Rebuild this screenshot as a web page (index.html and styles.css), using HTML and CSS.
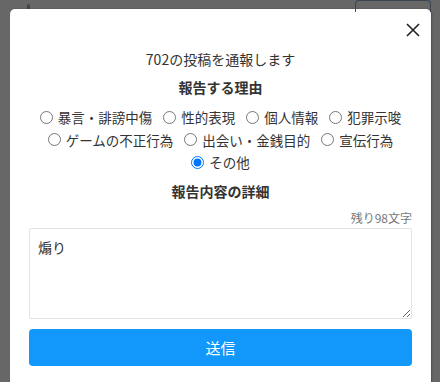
FILE: index.html
```html
<!DOCTYPE html>
<html lang="ja">
<head>
<meta charset="UTF-8">
<meta name="viewport" content="width=device-width, initial-scale=1.0">
<title>通報</title>
<link rel="stylesheet" href="styles.css">
</head>
<body>

<div class="backdrop-header">
    <span class="header-dot"></span>
    <span class="header-button"></span>
</div>

<div class="modal">
    <div class="modal-top">
        <button class="close-button" aria-label="閉じる">
            <svg width="14" height="14" viewBox="0 0 14 14">
                <path d="M1 1 L13 13 M13 1 L1 13" stroke="#222" stroke-width="1.6" fill="none"/>
            </svg>
        </button>
    </div>
    <p class="modal-title">702の投稿を通報します</p>
    <h3 class="section-title">報告する理由</h3>
    <div class="reasons">
        <label class="reason"><input type="radio" name="reason">暴言・誹謗中傷</label>
        <label class="reason"><input type="radio" name="reason">性的表現</label>
        <label class="reason"><input type="radio" name="reason">個人情報</label>
        <label class="reason"><input type="radio" name="reason">犯罪示唆</label>
        <label class="reason"><input type="radio" name="reason">ゲームの不正行為</label>
        <label class="reason"><input type="radio" name="reason">出会い・金銭目的</label>
        <label class="reason"><input type="radio" name="reason">宣伝行為</label>
        <label class="reason"><input type="radio" name="reason" checked>その他</label>
    </div>
    <h3 class="section-title detail-title">報告内容の詳細</h3>
    <div class="remaining">残り98文字</div>
    <textarea class="detail-input">煽り</textarea>
    <button class="submit-button">送信</button>
</div>

</body>
</html>
```

FILE: styles.css
```css
body {
    font-family: "Noto Sans CJK JP", "Noto Sans", sans-serif;
    margin: 0;
    padding: 0;
    background-color: #676767;
    color: #333;
    height: 100vh;
    overflow: hidden;
}
.backdrop-header {
    height: 9px;
    display: flex;
    justify-content: space-between;
    padding: 0 9px 0 27px;
}
.header-dot {
    width: 3px;
    height: 5px;
    margin-top: 4px;
    border-radius: 2px 2px 0 0;
    background-color: #3d4848;
}
.header-button {
    width: 76px;
    height: 12px;
    border: 1px solid #3c4552;
    border-bottom: none;
    border-radius: 4px 4px 0 0;
    box-sizing: border-box;
}
.modal {
    margin: 0 9px 0 10px;
    padding: 14px 19px 0;
    background-color: #fff;
    border-radius: 5px 5px 0 0;
    box-shadow: 1px 0 2px rgba(0, 0, 0, 0.25);
    height: calc(100vh - 9px);
    box-sizing: border-box;
    overflow: hidden;
}
.modal-top {
    display: flex;
    justify-content: flex-end;
    margin-right: -8px;
    height: 14px;
}
.close-button {
    background: none;
    border: none;
    padding: 0;
    width: 14px;
    height: 14px;
    cursor: pointer;
}
.close-button svg {
    display: block;
}
.modal-title {
    margin: 12px 0 0;
    text-align: center;
    font-size: 14px;
    line-height: 21px;
}
.section-title {
    margin: 7px 0 0;
    text-align: center;
    font-size: 14px;
    line-height: 21px;
    font-weight: bold;
}
.reasons {
    margin-top: 8px;
    display: flex;
    flex-wrap: wrap;
    justify-content: center;
    column-gap: 11px;
    padding: 0 2px;
}
.reason {
    display: flex;
    align-items: center;
    font-size: 13.5px;
    line-height: 22.5px;
    cursor: pointer;
}
.reason input {
    margin: 0 5px 0 0;
    width: 13px;
    height: 13px;
}
.detail-title {
    margin-top: 7px;
}
.remaining {
    margin-top: 7px;
    text-align: right;
    font-size: 12px;
    line-height: 18px;
    color: #777;
}
.detail-input {
    display: block;
    width: 100%;
    height: 91px;
    margin-top: 1px;
    padding: 8px 8px;
    border: 1px solid #e3e3e6;
    border-radius: 2px;
    box-sizing: border-box;
    font-family: inherit;
    font-size: 14px;
    line-height: 20px;
    color: #333;
    resize: vertical;
}
.submit-button {
    display: block;
    width: 100%;
    height: 37px;
    margin-top: 10px;
    background-color: #1198fa;
    color: white;
    border: none;
    border-radius: 4px;
    font-family: inherit;
    font-size: 15px;
    cursor: pointer;
}
```
